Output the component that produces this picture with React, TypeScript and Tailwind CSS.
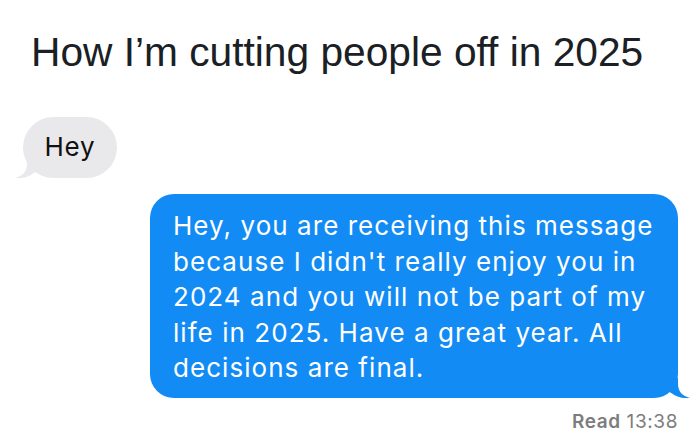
const lines = [
  'Hey, you are receiving this message',
  "because I didn't really enjoy you in",
  '2024 and you will not be part of my',
  'life in 2025. Have a great year. All',
  'decisions are final.',
]

function Tail({ color, flip }: { color: string; flip?: boolean }) {
  return (
    <svg
      width="24"
      height="20"
      viewBox="0 0 24 20"
      className={`absolute bottom-0 ${flip ? '-left-[8px] -scale-x-100' : '-right-[12px]'}`}
    >
      <path d="M0 0 L12 0 L12 6 C12 13 16 18 24 20 C18 20.6 11 19.5 6 15.5 L0 12 Z" fill={color} />
    </svg>
  )
}

export default function App() {
  return (
    <div className="w-[700px] h-[447px] bg-white overflow-hidden font-['Inter',sans-serif]">
      <h1 className="pt-[32px] pl-[31px] text-[40.7px] leading-[40px] text-[#1a2024] font-['Liberation_Sans',Arial,sans-serif]">
        How I’m cutting people off in 2025
      </h1>

      <div className="relative mt-[45px] ml-[23px] w-[94px] h-[61px] rounded-full bg-[#e9e9eb] flex items-center justify-center">
        <span className="text-[26px] text-[#111] leading-none tracking-[0.8px] -mt-[1px]">Hey</span>
        <Tail color="#e9e9eb" flip />
      </div>

      <div className="relative mt-[16px] ml-[150px] w-[528px] rounded-[24px] bg-[#138bf4] pl-[23px] pt-[14px] pb-[12px] text-white text-[26px] leading-[35.5px] tracking-[1.05px]">
        {lines.map(l => (
          <div key={l} className="whitespace-nowrap">{l}</div>
        ))}
        <Tail color="#138bf4" />
      </div>

      <div className="mt-[10px] w-[678px] text-right text-[19px] tracking-[0.6px] text-[#7d7d7d]">
        <span className="font-semibold">Read</span> 13:38
      </div>
    </div>
  )
}
